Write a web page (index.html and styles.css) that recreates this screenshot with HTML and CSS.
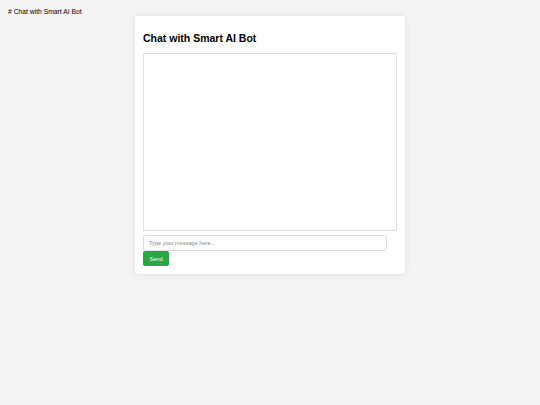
FILE: index.html
```html
<!DOCTYPE html>
<html>
<head>
<meta charset="utf-8">
<link rel="stylesheet" href="styles.css">
</head>
<body>
<div class="heading-raw"># Chat with Smart AI Bot</div>
<div class="card">
  <h2 class="title">Chat with Smart AI Bot</h2>
  <div class="chat-box"></div>
  <input class="msg-input" type="text" placeholder="Type your message here...">
  <button class="send-btn">Send</button>
</div>
</body>
</html>
```
FILE: styles.css
```css
html, body {
  margin: 0;
  padding: 0;
}
body {
  background: #f4f4f4;
  font-family: "Liberation Sans", Arial, sans-serif;
  padding-top: 8px;
  min-height: 397px;
}
.heading-raw {
  padding-left: 8px;
  font-size: 6.75px;
  line-height: 8px;
  color: #000;
}
.card {
  width: 254px;
  margin: 0 auto;
  background: #fff;
  padding: 8px;
  border-radius: 3px;
  box-shadow: 0 0 6px rgba(0,0,0,0.1);
}
.title {
  margin: 8px 0 9px 0;
  font-size: 10.5px;
  line-height: 12px;
  font-weight: bold;
  color: #000;
}
.chat-box {
  height: 176px;
  border: 1px solid #e0e0e0;
  background: #fff;
}
.msg-input {
  display: block;
  box-sizing: border-box;
  width: 244px;
  height: 16px;
  margin: 4px 0 0 0;
  padding: 0 5px;
  border: 1px solid #dcdcdc;
  border-radius: 3px;
  font-family: "Liberation Sans", Arial, sans-serif;
  font-size: 5.6px;
  outline: none;
}
.msg-input::placeholder {
  color: #888;
}
.send-btn {
  display: block;
  box-sizing: border-box;
  width: 26px;
  height: 15px;
  margin: 0;
  padding: 0;
  border: none;
  border-radius: 2px;
  background: #28a745;
  color: #fff;
  font-family: "Liberation Sans", Arial, sans-serif;
  font-size: 5.6px;
}
```
